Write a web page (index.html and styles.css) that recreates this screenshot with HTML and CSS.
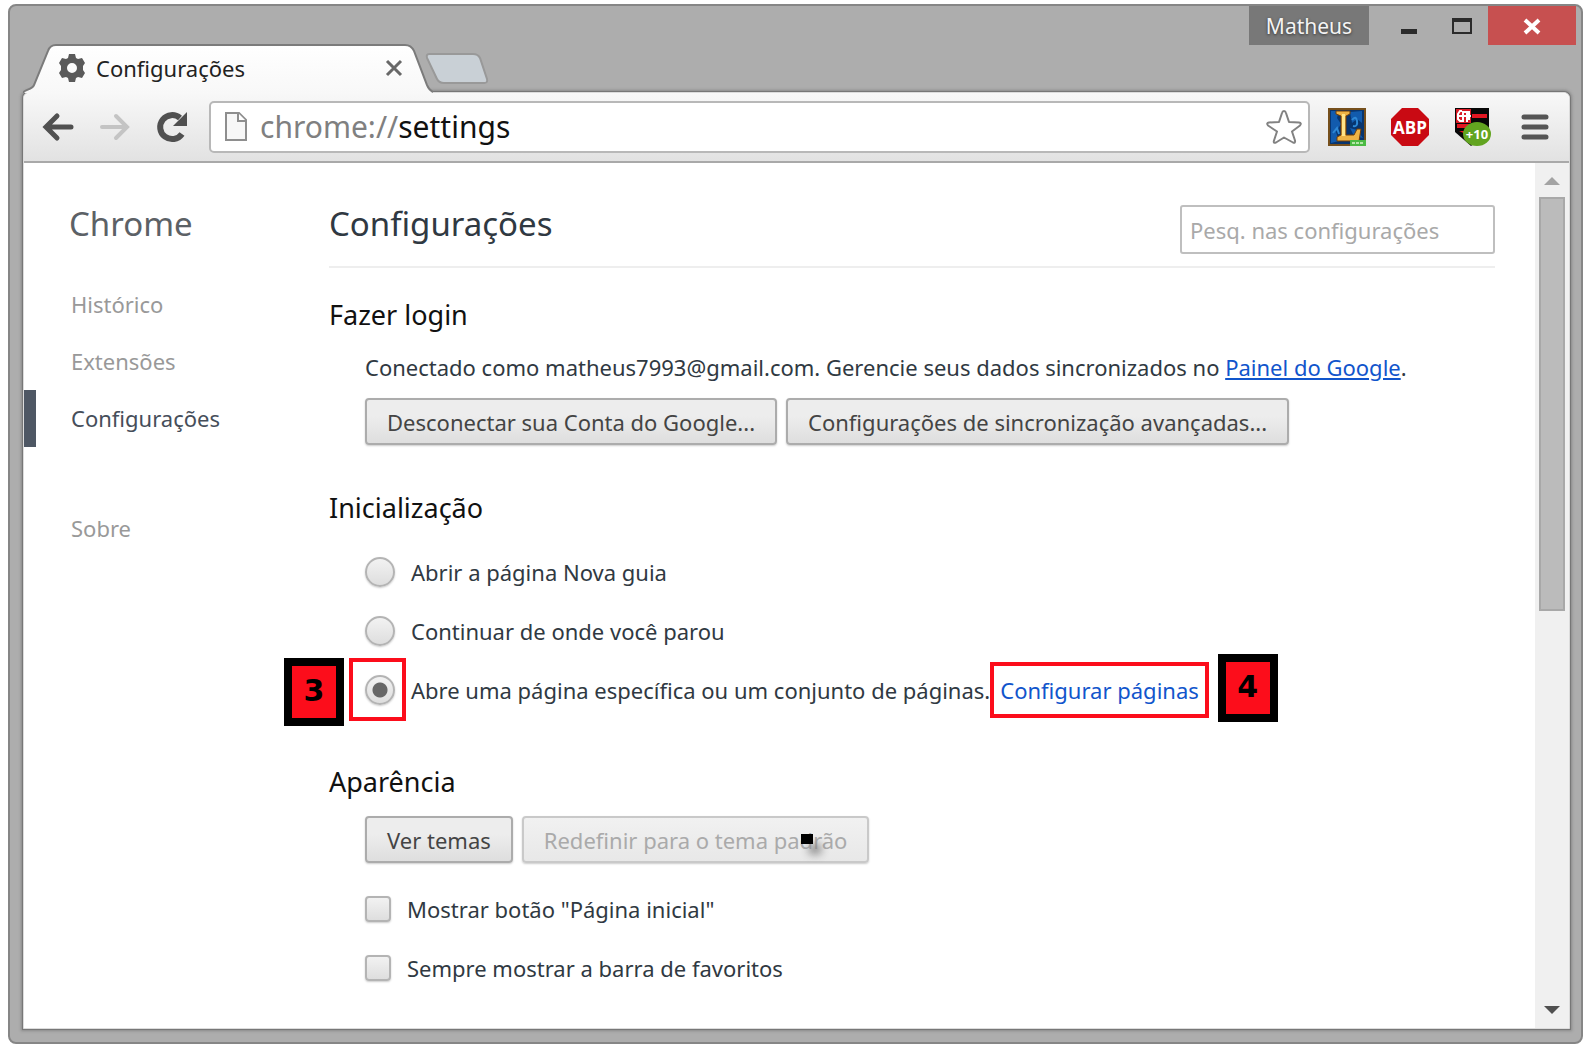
FILE: index.html
```html
<!DOCTYPE html>
<html lang="pt-BR">
<head>
<meta charset="utf-8">
<title>Configurações</title>
<link rel="stylesheet" href="styles.css">
</head>
<body>
<div class="window">
  <header class="titlebar">
    <div class="tab">
      <svg class="tab-shape" viewBox="0 0 410 50" preserveAspectRatio="none" aria-hidden="true">
        <defs><linearGradient id="tabfill" x1="0" y1="0" x2="0" y2="1"><stop offset="0" stop-color="#fff"/><stop offset="1" stop-color="#f8f8f8"/></linearGradient></defs>
        <path d="M0 50C1 46 9 47 11 42L25 7Q27 1 33 1H382Q388 1 391 7L404 42Q406 47 410 50Z" fill="url(#tabfill)"/>
        <path d="M0 50C1 46 9 47 11 42L25 7Q27 1 33 1H382Q388 1 391 7L404 42Q406 47 410 49" fill="none" stroke="#7b7b7b" stroke-width="2"/>
      </svg>
      <svg class="gear" viewBox="0 0 28 28" aria-hidden="true">
        <path fill="#5a5a5a" fill-rule="evenodd" d="M11 0h6l1 4 2 1 4-1 3 5-2 3v4l2 3-3 5-4-1-2 1-1 4h-6l-1-4-2-1-4 1-3-5 2-3v-4L1 9l3-5 4 1 2-1zM14 9a5 5 0 1 0 0 10 5 5 0 0 0 0-10z"/>
      </svg>
      <span class="tab-title">Configurações</span>
      <button class="tab-close" aria-label="Fechar guia"><svg viewBox="0 0 18 18"><path d="M2 2l14 14M16 2L2 16" stroke="#686868" stroke-width="3"/></svg></button>
    </div>
    <button class="new-tab" aria-label="Nova guia">
      <svg viewBox="0 0 64 34"><path d="M4 2H48Q53 2 55 6L62 27Q63 31 59 31H19Q14 31 12 27L2 6Q1 2 4 2Z" fill="#c9d0d6" stroke="#999" stroke-width="2"/></svg>
    </button>
    <div class="controls">
      <button class="user">Matheus</button>
      <button class="win-btn" aria-label="Minimizar"><svg viewBox="0 0 24 24"><path d="M4 15h16v5H4z" fill="#2b2b2b"/></svg></button>
      <button class="win-btn" aria-label="Maximizar"><svg viewBox="0 0 24 24"><path fill="#2b2b2b" fill-rule="evenodd" d="M2 4h20v16H2zM4 8v10h16V8z"/></svg></button>
      <button class="win-close" aria-label="Fechar"><svg viewBox="0 0 24 24"><path d="M5 6l14 13M19 6L5 19" stroke="#fff" stroke-width="4"/></svg></button>
    </div>
  </header>

  <div class="client">
    <nav class="toolbar" aria-label="Navegação">
      <button class="tool back" aria-label="Voltar"><svg viewBox="0 0 32 32"><path d="M15 5L4 16l11 11M5 16h24" fill="none" stroke="#505050" stroke-width="5" stroke-linecap="round"/></svg></button>
      <button class="tool forward" aria-label="Avançar"><svg viewBox="0 0 32 32"><path d="M17 5l11 11-11 11M27 16H3" fill="none" stroke="#c4c4c4" stroke-width="4" stroke-linecap="round"/></svg></button>
      <button class="tool reload" aria-label="Recarregar"><svg viewBox="0 0 32 32"><path d="M26 23A12 12 0 1 1 24 7" fill="none" stroke="#505050" stroke-width="6"/><path d="M31 1v14H17z" fill="#505050"/></svg></button>
      <div class="omnibox">
        <svg class="page-icon" viewBox="0 0 24 32" aria-hidden="true"><path d="M2 2h13l7 7v20H2z" fill="#f7f7f7" stroke="#8e8e8e" stroke-width="2"/><path d="M14 2v8h8" fill="#fff" stroke="#8e8e8e" stroke-width="2"/></svg>
        <div class="url"><span class="scheme">chrome://</span>settings</div>
        <button class="star" aria-label="Favoritar"><svg viewBox="0 0 36 36"><path d="M18 2q1.500 0 2 2l3 9 10 .5q3 .5 1 3l-8 6 3 9q.5 3-2 2l-9-5-8 5q-3 1-2-2l3-9-9-6q-2-2.500 1-3l10-.5 3-9q.5-2 2-2z" fill="#fff" stroke="#828282" stroke-width="2" stroke-linejoin="round"/></svg></button>
      </div>
      <button class="ext" aria-label="LoL">
        <svg viewBox="0 0 38 38"><rect x="1" y="1" width="36" height="36" fill="#08356f" stroke="#76501d" stroke-width="2"/><path d="M3 3h8l-2 7 4 6-5 8 3 9-8 2zM22 4l12-1v12l-5-4-5 4zM22 20l7 2 6 8-9-2z" fill="#125bad"/><path d="M24 12q4-5 5 1t-4 5M5 25l4-5 2 6" fill="none" stroke="#2d88d6" stroke-width="2"/><path d="M8 3h14v3l-4 2v19h8l3-6h4l-2 12H9v-4l4-2V8L8 6z" fill="#efb345" stroke="#6f3c08" stroke-width="1"/><path d="M14 6h3v22h-3z" fill="#ffe489"/><path d="M22 32h16v6H22z" fill="#4aba43"/><path d="M24 35h12" stroke="#b2e5a8" stroke-width="2" stroke-dasharray="3 1"/></svg>
      </button>
      <button class="ext" aria-label="ABP">
        <svg viewBox="0 0 38 38"><path d="M11 0h16l11 11v16L27 38H11L0 27V11z" fill="#c90a13"/><text x="19" y="26" text-anchor="middle" class="abp">ABP</text></svg>
      </button>
      <button class="ext" aria-label="Flamengo +10">
        <svg viewBox="0 0 38 38"><path d="M1 0h34v25L17 38 1 24z" fill="#080808"/><path d="M2 1h15v14H2z" fill="#d91b27"/><path d="M18 6h15v4H18zM3 16h13v4H3zM5 23h9v4z" fill="#e31722"/><path d="M8 3H6L4 6v5l2 2h3M9 3v11M13 4v10M4 8h13M9 4h6v8" fill="none" stroke="#fff" stroke-width="2"/><ellipse cx="23" cy="26" rx="14" ry="12" fill="#62a420"/><text x="23" y="31" text-anchor="middle" class="plus">+10</text></svg>
      </button>
      <button class="menu" aria-label="Menu"><svg viewBox="0 0 28 28"><path d="M3 4h22M3 14h22M3 24h22" stroke="#555" stroke-width="5" stroke-linecap="round"/></svg></button>
    </nav>

    <div class="page">
      <aside class="sidebar">
        <h1 class="brand">Chrome</h1>
        <nav class="side-nav">
          <a href="#historico">Histórico</a>
          <a href="#extensoes">Extensões</a>
          <a href="#configuracoes" class="active">Configurações</a>
          <a href="#sobre" class="about">Sobre</a>
        </nav>
      </aside>
      <main class="main">
        <div class="page-head">
          <h2 class="page-title">Configurações</h2>
          <input class="search" type="search" placeholder="Pesq. nas configurações" aria-label="Pesquisar nas configurações">
        </div>
        <section class="section">
          <h3>Fazer login</h3>
          <div class="section-body">
            <p class="line">Conectado como matheus7993@gmail.com. Gerencie seus dados sincronizados no <a class="dash-link" href="#painel">Painel do Google</a>.</p>
            <div class="buttons">
              <button class="btn">Desconectar sua Conta do Google...</button>
              <button class="btn">Configurações de sincronização avançadas...</button>
            </div>
          </div>
        </section>
        <section class="section startup">
          <h3>Inicialização</h3>
          <div class="section-body">
            <div class="option"><input type="radio" name="startup" id="r1"><label for="r1">Abrir a página Nova guia</label></div>
            <div class="option"><input type="radio" name="startup" id="r2"><label for="r2">Continuar de onde você parou</label></div>
            <div class="option">
              <span class="badge badge-left">3</span>
              <span class="mark mark-radio"></span>
              <input type="radio" name="startup" id="r3" checked><label for="r3">Abre uma página específica ou um conjunto de páginas.</label>
              <span class="pages"><a class="pages-link" href="#paginas">Configurar páginas</a><span class="mark mark-link"></span><span class="badge badge-right">4</span></span>
            </div>
          </div>
        </section>
        <section class="section">
          <h3>Aparência</h3>
          <div class="section-body">
            <div class="buttons theme-buttons">
              <button class="btn">Ver temas</button>
              <button class="btn reset" disabled>Redefinir para o tema padrão<span class="pointer"></span></button>
            </div>
            <div class="option check"><input type="checkbox" id="c1"><label for="c1">Mostrar botão "Página inicial"</label></div>
            <div class="option check"><input type="checkbox" id="c2"><label for="c2">Sempre mostrar a barra de favoritos</label></div>
          </div>
        </section>
      </main>
      <div class="scrollbar" aria-hidden="true">
        <svg class="arrow" viewBox="0 0 16 8"><path d="M8 0l8 8H0z" fill="#a3a3a3"/></svg>
        <div class="track"><div class="thumb"></div></div>
        <svg class="arrow" viewBox="0 0 16 8"><path d="M0 0h16L8 8z" fill="#505050"/></svg>
      </div>
    </div>
  </div>
</div>
</body>
</html>
```
FILE: styles.css
```css
* { box-sizing: border-box; }
body {
  margin: 0;
  min-height: 100vh;
  padding: 4px 7px 6px 8px;
  display: flex;
  background: #fff;
  color: #303942;
  font: 22px/32px "Noto Sans", "Open Sans", sans-serif;
}
h1, h2, h3, p { margin: 0; font-weight: 400; }
button { font: inherit; color: inherit; padding: 0; border: 0; background: none; }
svg { display: block; flex: none; }

.window {
  flex: 1;
  min-width: 0;
  display: flex;
  flex-direction: column;
  padding: 0 11px 13px 13px;
  background: #adadad;
  border: 2px solid #868686;
  border-radius: 8px;
}

/* title bar */
.titlebar { display: flex; height: 86px; align-items: flex-end; }
.tab {
  position: relative;
  z-index: 1;
  display: flex;
  align-items: center;
  width: 410px;
  height: 49px;
  margin-bottom: -1px;
  padding: 0 30px 2px 35px;
  color: #222;
}
.tab-shape { position: absolute; inset: 0; width: 100%; height: 100%; }
.gear { position: relative; width: 28px; height: 28px; }
.tab-title { position: relative; flex: 1; padding-left: 10px; }
.tab-close { position: relative; }
.tab-close svg { width: 18px; height: 18px; }
.new-tab { margin: 0 0 6px -8px; }
.new-tab svg { width: 64px; height: 34px; }
.controls { display: flex; margin-left: auto; margin-right: -6px; align-self: flex-start; }
.user {
  width: 120px;
  height: 39px;
  background: #787878;
  color: #f4f4f4;
  font-size: 21px;
  text-shadow: 0 1px 3px #333;
}
.win-btn { width: 53px; height: 39px; display: flex; align-items: center; justify-content: center; }
.user + .win-btn { margin-left: 13px; }
.win-btn svg { width: 24px; height: 24px; }
.win-close { width: 88px; height: 39px; background: #c75050; display: flex; align-items: center; justify-content: center; }
.win-close svg { width: 24px; height: 24px; }

/* browser client area */
.client {
  flex: 1;
  display: flex;
  flex-direction: column;
  border: 1px solid #dcdcdc;
  border-radius: 6px 6px 0 0;
  box-shadow: 0 0 0 1px #777, 0 0 3px 2px #888;
  background: #fff;
}
.toolbar {
  display: flex;
  align-items: center;
  height: 70px;
  padding: 0 20px 0 18px;
  background: linear-gradient(#f8f8f8, #e2e2e2);
  border-bottom: 2px solid #a9a9a9;
  border-radius: 6px 6px 0 0;
}
.tool svg { width: 32px; height: 32px; }
.tool { margin-right: 25px; }
.reload { margin-right: 21px; }
.omnibox {
  flex: 1;
  display: flex;
  align-items: center;
  height: 52px;
  padding: 0 6px 0 13px;
  background: #fff;
  border: 2px solid #b8b8b8;
  border-radius: 5px;
}
.page-icon { width: 24px; height: 32px; }
.url { flex: 1; padding-left: 12px; font-size: 30px; color: #111; }
.scheme { color: #808080; }
.star svg { width: 36px; height: 36px; }
.ext { margin-left: 25px; }
.omnibox + .ext { margin-left: 18px; }
.ext svg { width: 38px; height: 38px; }
.abp { font: 700 17px "Open Sans", sans-serif; fill: #fff; }
.plus { font: 700 13px "Open Sans", sans-serif; fill: #fff; }
.menu { margin-left: 29px; }
.menu svg { width: 28px; height: 28px; }

/* settings page */
.page { flex: 1; display: flex; }
.sidebar { width: 305px; flex: none; padding-top: 38px; }
.brand { padding-left: 45px; font-size: 33px; line-height: 46px; color: #5c6166; }
.side-nav { display: flex; flex-direction: column; margin-top: 29px; }
.side-nav a {
  padding-left: 35px;
  border-left: 12px solid transparent;
  line-height: 57px;
  color: #999;
  text-decoration: none;
}
.side-nav .active { color: #464e5a; border-color: #4e5764; }
.side-nav .about { margin-top: 53px; }

.main { flex: 1; min-width: 0; padding: 38px 40px 0 0; }
.page-head {
  display: flex;
  justify-content: space-between;
  height: 67px;
  border-bottom: 2px solid #eee;
}
.page-title { font-size: 33px; line-height: 46px; }
.search {
  width: 315px;
  height: 49px;
  margin-top: 4px;
  padding: 0 8px;
  border: 2px solid #bfbfbf;
  border-radius: 3px;
  font: inherit;
  background: #fff;
}
.search::placeholder { color: #a9a9a9; opacity: 1; }
.section { padding-top: 28px; }
.section + .section { padding-top: 44px; }
.section h3 { font-size: 27px; line-height: 38px; color: #111; }
.section-body { padding-left: 36px; }
.line { padding-top: 17px; white-space: nowrap; }
.dash-link { color: #15c; }
.buttons { display: flex; gap: 9px; padding-top: 15px; }
.btn {
  position: relative;
  height: 47px;
  padding: 0 20px;
  border: 2px solid #acacac;
  border-radius: 4px;
  background: linear-gradient(#ededed 38%, #dedede);
  box-shadow: 0 1px 2px #ccc;
  color: #444;
  white-space: nowrap;
}
.btn:disabled { color: #aaa; border-color: #c9c9c9; background: linear-gradient(#f1f1f1, #e8e8e8); }
.pointer { position: absolute; right: 54px; top: 16px; width: 12px; height: 10px; background: #000; box-shadow: 8px 10px 8px #888; }

.option { position: relative; display: flex; align-items: center; height: 59px; white-space: nowrap; }
.option input {
  appearance: none;
  flex: none;
  width: 30px;
  height: 30px;
  margin: 0 16px 0 0;
  border: 2px solid #b4b4b4;
  border-radius: 50%;
  background: linear-gradient(#f2f2f2, #dedede);
  box-shadow: 0 1px 2px #ccc;
}
.option input:checked { background: radial-gradient(circle, #666 7px, transparent 8px), linear-gradient(#f2f2f2, #dedede); }
.startup .section-body { padding-top: 15px; }
.theme-buttons { padding-bottom: 16px; }
.check input { width: 26px; height: 26px; border-radius: 4px; }
.pages { position: relative; margin-left: 10px; }
.pages-link { color: #15c; text-decoration: none; }

/* tutorial marks laid over the page */
.mark { position: absolute; border: 4px solid #fc0d1b; pointer-events: none; }
.mark-radio { left: -16px; top: -2px; width: 57px; height: 63px; }
.mark-link { left: -10px; right: -10px; top: -12px; height: 56px; }
.badge {
  position: absolute;
  width: 60px;
  height: 68px;
  border: 8px solid #000;
  background: #fc0d1b;
  color: #000;
  font: 700 30px/50px "DejaVu Sans", sans-serif;
  text-align: center;
}
.badge-left { left: -81px; top: -2px; }
.badge-right { left: calc(100% + 19px); top: -20px; }

/* scroll bar */
.scrollbar {
  width: 34px;
  flex: none;
  display: flex;
  flex-direction: column;
  align-items: center;
  padding: 14px 0;
  background: #f0f0f0;
}
.arrow { width: 16px; height: 8px; }
.track { flex: 1; width: 26px; padding: 12px 0; }
.thumb { height: 52%; background: #bbb; border: 2px solid #a8a8a8; }
```
